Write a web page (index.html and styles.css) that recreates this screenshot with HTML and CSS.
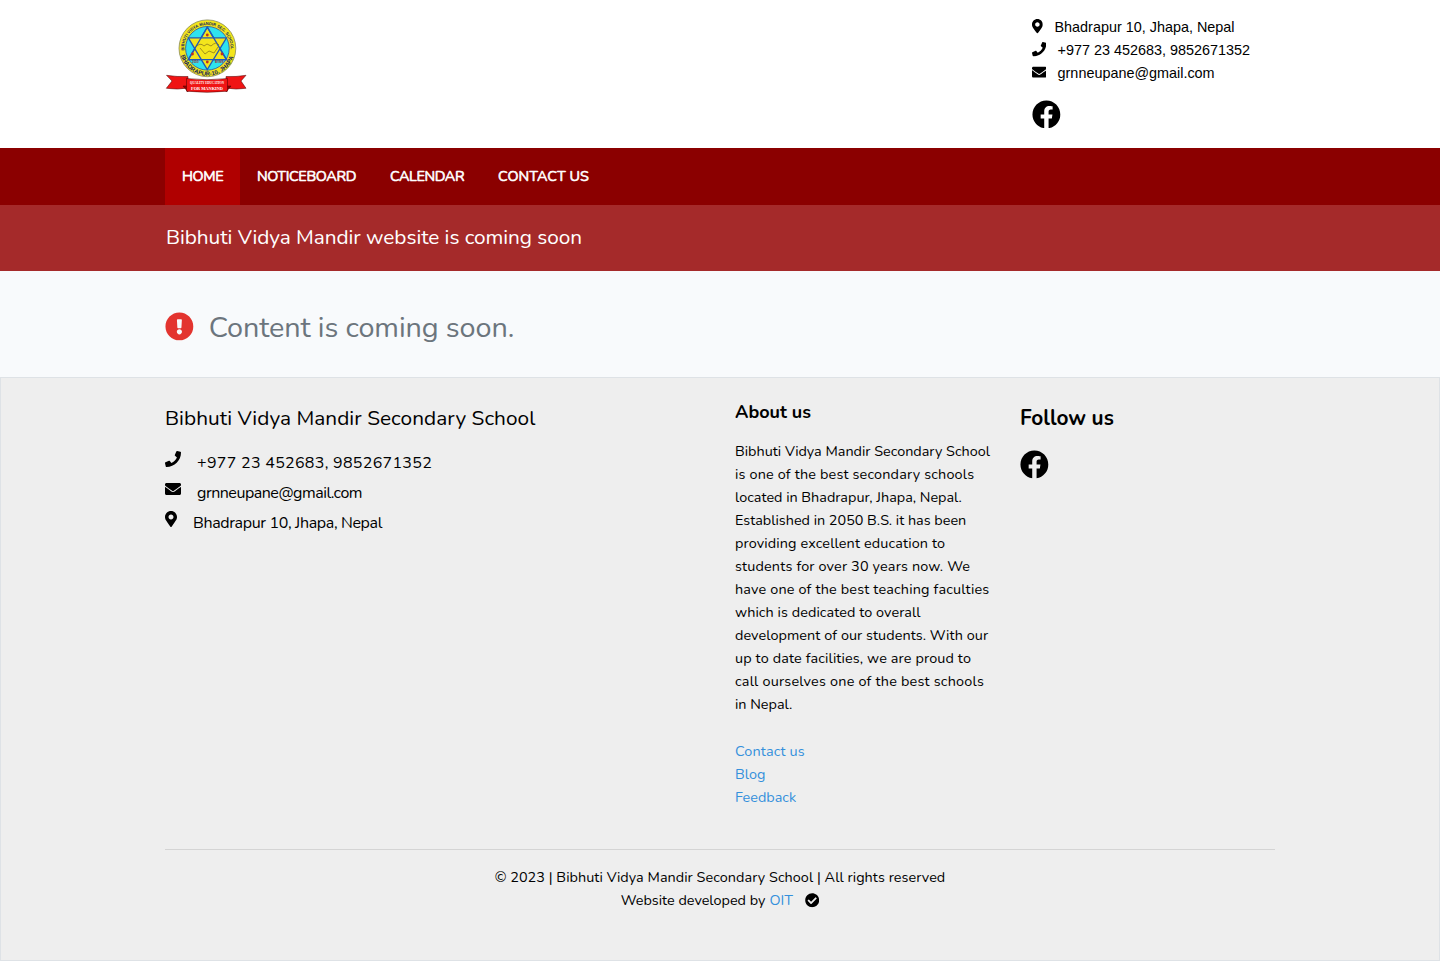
FILE: index.html
```html
<!DOCTYPE html>
<html lang="en">
<head>
<meta charset="utf-8">
<title>Bibhuti Vidya Mandir Secondary School</title>
<link rel="stylesheet" href="styles.css">
</head>
<body>
<svg class="defs" aria-hidden="true">
  <symbol id="marker" viewBox="0 0 384 512"><path d="M172.268 501.67C26.97 291.031 0 269.413 0 192 0 85.961 85.961 0 192 0s192 85.961 192 192c0 77.413-26.97 99.031-172.268 309.67-9.535 13.774-29.93 13.773-39.464 0zM192 272c44.183 0 80-35.817 80-80s-35.817-80-80-80-80 35.817-80 80 35.817 80 80 80z"/></symbol>
  <symbol id="phone" viewBox="0 0 512 512"><path d="M493.4 24.6l-104-24c-11.3-2.6-22.9 3.3-27.5 13.9l-48 112c-4.2 9.8-1.4 21.3 6.9 28l60.6 49.6c-36 76.7-98.9 140.5-177.2 177.2l-49.6-60.6c-6.8-8.3-18.2-11.1-28-6.9l-112 48C3.9 366.5-2 378.1.6 389.4l24 104C27.1 504.2 36.7 512 48 512c256.1 0 464-207.5 464-464 0-11.2-7.7-20.9-18.6-23.4z"/></symbol>
  <symbol id="envelope" viewBox="0 0 512 512"><path d="M502.3 190.8c3.9-3.1 9.7-.2 9.7 4.7V400c0 26.5-21.5 48-48 48H48c-26.5 0-48-21.5-48-48V195.6c0-5 5.7-7.8 9.7-4.7 22.4 17.4 52.1 39.5 154.1 113.6 21.1 15.4 56.7 47.8 92.2 47.6 35.7.3 72-32.8 92.3-47.6 102-74.1 131.6-96.3 154-113.7zM256 320c23.2.4 56.6-29.2 73.4-41.4 132.7-96.3 142.8-104.7 173.4-128.7 5.8-4.5 9.2-11.5 9.2-18.9v-19c0-26.5-21.5-48-48-48H48c-26.5 0-48 21.5-48 48v19c0 7.4 3.4 14.3 9.2 18.9 30.6 23.9 40.7 32.4 173.4 128.7 16.8 12.2 50.2 41.8 73.4 41.4z"/></symbol>
  <symbol id="facebook" viewBox="0 0 512 512"><path d="M504 256C504 119 393 8 256 8S8 119 8 256c0 123.78 90.69 226.38 209.25 245V327.69h-63V256h63v-54.64c0-62.15 37-96.48 93.67-96.48 27.14 0 55.52 4.84 55.52 4.84v61h-31.28c-30.8 0-40.41 19.12-40.41 38.73V256h68.78l-11 71.69h-57.78V501C413.31 482.38 504 379.78 504 256z"/></symbol>
  <symbol id="alert" viewBox="0 0 512 512"><path d="M504 256c0 136.997-111.043 248-248 248S8 392.997 8 256C8 119.083 119.043 8 256 8s248 111.083 248 248zm-248 50c-25.405 0-46 20.595-46 46s20.595 46 46 46 46-20.595 46-46-20.595-46-46-46zm-43.673-165.346l7.418 136c.347 6.364 5.609 11.346 11.982 11.346h48.546c6.373 0 11.635-4.982 11.982-11.346l7.418-136c.375-6.874-5.098-12.654-11.982-12.654h-63.383c-6.884 0-12.356 5.78-11.981 12.654z"/></symbol>
  <symbol id="check" viewBox="0 0 512 512"><path d="M504 256c0 136.967-111.033 248-248 248S8 392.967 8 256 119.033 8 256 8s248 111.033 248 248zM227.314 387.314l184-184c6.248-6.248 6.248-16.379 0-22.627l-22.627-22.627c-6.248-6.249-16.379-6.249-22.628 0L216 308.118l-70.059-70.059c-6.248-6.248-16.379-6.248-22.628 0l-22.627 22.627c-6.248 6.248-6.248 16.379 0 22.627l104 104c6.249 6.249 16.379 6.249 22.628.001z"/></symbol>
</svg>

<header class="container top">
  <svg class="logo" viewBox="5 5 82 75">
    <circle cx="47.4" cy="34.3" r="28.4" fill="#f3e51c" stroke="#8a8a5a" stroke-width=".8"/>
    <circle cx="47.4" cy="34.3" r="21.8" fill="#2fe3ee" stroke="#2b50a0" stroke-width=".8"/>
    <g fill="#f3e51c" stroke="#2158b8" stroke-width="1.3">
      <path d="M47.3 13.2 66.5 45.6H28.3Z"/>
      <path d="M47.3 55.6 28.3 23.8H66.5Z"/>
      <path d="M47.3 13.2 66.5 45.6H28.3Z" fill="none"/>
    </g>
    <path d="M36 33q4-5 8-1l3-2 4 2q5-5 8-1M40 34l5 6 4-3 5 2 4-6" fill="none" stroke="#8c7a1c" stroke-width=".8"/>
    <g fill="#c03020"><circle cx="47.3" cy="21" r="1.4"/><circle cx="32.5" cy="40" r="1.4"/><circle cx="62" cy="40" r="1.4"/><circle cx="47.3" cy="48" r="1.4"/></g>
    <path id="ringTop" d="M24.2 36.5A23.3 23.3 0 1 1 70.6 36.5" fill="none"/>
    <path id="ringBottom" d="M20.8 41.5A27.6 27.6 0 0 0 74 41.5" fill="none"/>
    <text class="ring"><textPath href="#ringTop" textLength="76" lengthAdjust="spacingAndGlyphs">BIBHUTI VIDYA MANDIR SEC. SCHOOL</textPath></text>
    <text class="ring big"><textPath href="#ringBottom" textLength="70" lengthAdjust="spacingAndGlyphs">BHADRAPUR-10, JHAPA</textPath></text>
    <g class="tiny"><text x="32" y="48.6">2050</text><text x="55" y="48.6">BVMS</text></g>
    <g fill="#f01414" stroke="#400" stroke-width=".5">
      <path d="M28 62.5Q17 63 6.5 61.3L12 67 6.3 74.3Q18 76 28 74Z"/>
      <path d="M66 62.5Q76 63 86 61.3L81 67 86 74.3Q76 76 66 74Z"/>
      <path d="M23 72 28 78V72ZM71 72 66 78V72Z" fill="#900"/>
      <path d="M26.5 64.5Q47 67 67.5 64.5V77.2Q47 79.5 26.5 77.2Z"/>
    </g>
    <g class="motto"><text x="30" y="70" textLength="34" lengthAdjust="spacingAndGlyphs">QUALITY EDUCATION</text><text x="31" y="75.6" textLength="32" lengthAdjust="spacingAndGlyphs">FOR MANKIND</text></g>
  </svg>
  <div class="contacts">
    <p><svg class="icon pin"><use href="#marker"/></svg>Bhadrapur 10, Jhapa, Nepal</p>
    <p><svg class="icon"><use href="#phone"/></svg>+977 23 452683, 9852671352</p>
    <p><svg class="icon"><use href="#envelope"/></svg>grnneupane@gmail.com</p>
    <svg class="icon large"><use href="#facebook"/></svg>
  </div>
</header>

<nav class="navbar"><div class="container links">
  <a class="home active">HOME</a><a class="notice">NOTICEBOARD</a><a class="cal">CALENDAR</a><a class="contact">CONTACT US</a>
</div></nav>

<section class="banner"><div class="container"><span>Bibhuti Vidya Mandir website is coming soon</span></div></section>

<main><div class="container message"><svg class="icon large"><use href="#alert"/></svg><span>Content is coming soon.</span></div></main>

<footer>
  <div class="container columns">
    <section class="school">
      <h2>Bibhuti Vidya Mandir Secondary School</h2>
      <p><svg class="icon"><use href="#phone"/></svg><span class="tel">+977 23 452683, 9852671352</span></p>
      <p><svg class="icon"><use href="#envelope"/></svg><span class="mail">grnneupane@gmail.com</span></p>
      <p><svg class="icon pin"><use href="#marker"/></svg><span class="place">Bhadrapur 10, Jhapa, Nepal</span></p>
    </section>
    <section class="about">
      <h3>About us</h3>
      <p>Bibhuti Vidya Mandir Secondary School<br><span class="wide">is one of the best secondary schools</span><br>located in Bhadrapur, Jhapa, Nepal.<br>Established in 2050 B.S. it has been<br><span class="open">providing excellent education to</span><br><span class="wide">students for over 30 years now. We</span><br><span class="wide">have one of the best teaching faculties</span><br><span class="slight">which is dedicated to overall</span><br><span class="slight">development of our students. With our</span><br><span class="open">up to date facilities, we are proud to</span><br><span class="wider">call ourselves one of the best schools</span><br>in Nepal.</p>
      <div class="footer-links"><a class="open">Contact us</a><a>Blog</a><a>Feedback</a></div>
    </section>
    <section class="follow">
      <h3>Follow us</h3>
      <svg class="icon large"><use href="#facebook"/></svg>
    </section>
  </div>
  <div class="container"><div class="legal">
    <p class="copy">© 2023 | Bibhuti Vidya Mandir Secondary School | All rights reserved</p>
    <p class="dev">Website developed by <a>OIT</a><svg class="icon"><use href="#check"/></svg></p>
  </div></div>
</footer>
</body>
</html>
```
FILE: styles.css
```css
* { box-sizing: border-box; }
body { margin: 0; background: #f8fafc; color: #000; font: 400 14.4px/23px Nunito, Lato, sans-serif; white-space: nowrap; }
p, h2, h3 { margin: 0; }
a { color: #3490dc; }
.defs { position: absolute; width: 0; height: 0; }
.container { width: 1140px; margin: 0 auto; padding: 0 15px; }
.icon { width: 14.4px; height: 14.4px; fill: currentColor; flex: none; }
.icon.pin { width: 10.8px; }
.icon.large { width: 28.8px; height: 28.8px; display: block; }

.top { display: flex; justify-content: space-between; height: 148px; padding-top: 16px; }
header { box-shadow: 0 0 0 100vmax #fff; clip-path: inset(0 -100vmax); background: #fff; }
.logo { width: 82px; height: 75px; margin-top: 3px; }
.ring { font: bold 4.2px "Liberation Sans", sans-serif; fill: #14245c; }
.ring.big { font-size: 6px; }
.tiny { font: bold 3px "Liberation Sans", sans-serif; fill: #a03030; }
.motto { font: bold 4px "Liberation Serif", serif; fill: #fff; }
.motto text:last-child { font-size: 5px; }
.contacts { width: 243px; font-family: "Liberation Sans", sans-serif; }
.contacts p { display: flex; align-items: center; gap: 11.2px; height: 23px; }
.contacts p .icon { margin-top: -2px; }
.contacts p .pin { margin-right: 0.5px; }
.contacts .large { margin: 14.6px 0 0 0.4px; }

.navbar { background: #8b0000; height: 57px; }
.links { display: flex; }
.links a { color: #fff; font-weight: 400; -webkit-text-stroke: 0.6px; line-height: 56px; height: 57px; padding-left: 17px; }
.links .active { background: #b00000; }
.home { width: 75px; letter-spacing: -0.35px; }
.notice { width: 133px; letter-spacing: -0.35px; }
.cal { width: 108px; letter-spacing: -0.4px; }
.contact { width: 125px; letter-spacing: 0.08px; }

.banner { background: #a52a2a; color: #fff; height: 66px; line-height: 65px; font-size: 20.8px; }
.banner span { margin-left: 1px; letter-spacing: -0.05px; }
main { height: 106px; color: #6c757d; font-size: 28.8px; line-height: 36px; padding-top: 39px; }
.message { display: flex; gap: 15px; letter-spacing: -0.1px; }
.message .icon { color: #e3342f; margin-top: 2px; }

footer { background: #eee; border: 1px solid #dee2e6; height: 584px; }
.columns { display: grid; grid-template-columns: 570px 285px 1fr; height: 471px; padding-top: 22px; }
.school { font-size: 16px; }
.school h2 { font-size: 20.8px; font-weight: 400; line-height: 36px; margin-bottom: 12px; letter-spacing: 0.05px; }
.school p { display: flex; gap: 16px; height: 30px; line-height: 30px; }
.school .icon { width: 16px; height: 16px; margin-top: 3px; }
.school .icon.pin { width: 12px; }
.tel { letter-spacing: 0.3px; }
.mail { letter-spacing: -0.48px; }
.place { letter-spacing: -0.35px; }
.about h3 { font-size: 18px; line-height: 24px; margin-bottom: 16px; }
.about .slight { letter-spacing: 0.07px; }
.about .open { letter-spacing: 0.13px; }
.about .wide { letter-spacing: 0.17px; }
.about .wider { letter-spacing: 0.21px; }
.footer-links { display: grid; margin-top: 24px; }
.follow h3 { font-size: 20.8px; line-height: 36px; margin-bottom: 13px; }
.follow .large { margin: 14px 0 0 0.4px; }
.legal { border-top: 1px solid #d4d4d4; padding-top: 16px; text-align: center; }
.copy { letter-spacing: 0.05px; }
.dev { display: flex; justify-content: center; align-items: center; }
.dev a { margin-left: 4px; }
.dev .icon { margin-left: 12px; }
```
